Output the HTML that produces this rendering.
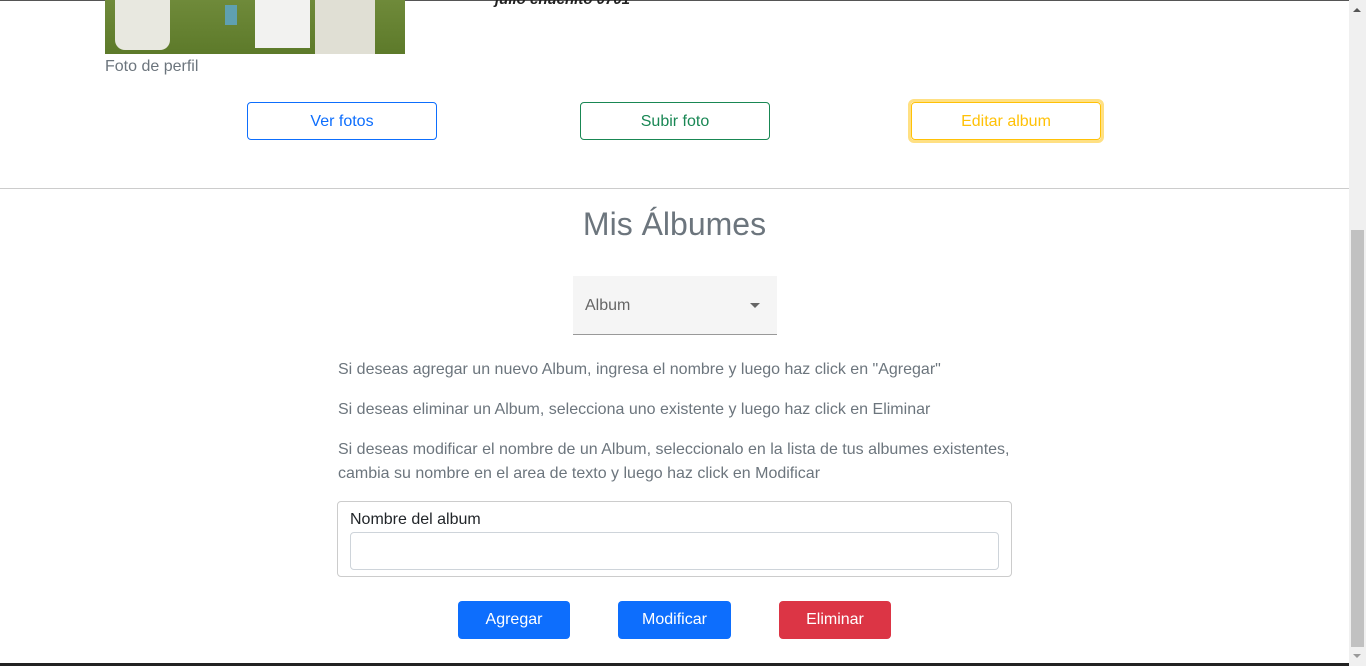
<!DOCTYPE html>
<html><head><meta charset="utf-8"><style>
body{margin:0;width:1366px;height:666px;overflow:hidden;background:#fff;font-family:"Liberation Sans",sans-serif;position:relative}
.abs{position:absolute}
.btn{position:absolute;box-sizing:border-box;border-radius:4px;font-size:16px;text-align:center;line-height:37px;height:38px}
p{margin:0}
</style></head><body>
<div class="abs" style="left:0;top:0;width:1366px;height:1px;background:#555"></div>
<div class="abs" style="left:105px;top:0;width:300px;height:54px;background:linear-gradient(180deg,#6f8a3a,#5d7a2a)">
 <div class="abs" style="left:10px;top:0;width:55px;height:50px;background:#e8e8e0;border-radius:0 0 10px 10px"></div>
 <div class="abs" style="left:120px;top:5px;width:12px;height:20px;background:#5fa0b0"></div>
 <div class="abs" style="left:150px;top:0;width:55px;height:48px;background:#f2f2f0"></div>
 <div class="abs" style="left:210px;top:0;width:60px;height:54px;background:#e0dfd4"></div>
</div>
<div class="abs" style="left:495px;top:-9px;font-size:15px;font-weight:bold;font-style:italic;color:#222">julio chuchito 0701</div>
<div class="abs" style="left:105px;top:58px;font-size:16px;color:#6c757d">Foto de perfil</div>
<div class="btn" style="left:247px;top:102px;width:190px;border:1px solid #0d6efd;color:#0d6efd">Ver fotos</div>
<div class="btn" style="left:580px;top:102px;width:190px;border:1px solid #198754;color:#198754">Subir foto</div>
<div class="btn" style="left:908px;top:99px;width:196px;height:44px;border:3px solid #ffe083;border-radius:6px;padding:0"><div style="margin:0;border:1px solid #ffc107;border-radius:4px;height:36px;color:#ffc107;line-height:37px">Editar album</div></div>
<div class="abs" style="left:0;top:188px;width:1349px;height:1px;background:#ccc"></div>
<div class="abs" style="left:0;top:206px;width:1349px;text-align:center;font-size:32px;color:#6c757d">Mis Álbumes</div>
<div class="abs" style="left:573px;top:276px;width:204px;height:59px;background:#f5f5f5;border-bottom:1px solid #999;box-sizing:border-box"></div>
<div class="abs" style="left:585px;top:297px;font-size:16px;color:#666">Album</div>
<div class="abs" style="left:750px;top:303px;width:0;height:0;border-left:5px solid transparent;border-right:5px solid transparent;border-top:5px solid #666"></div>
<div class="abs" style="left:338px;top:358px;font-size:16px;color:#6c757d;line-height:24px;width:700px">
<p>Si deseas agregar un nuevo Album, ingresa el nombre y luego haz click en "Agregar"</p>
<p style="margin-top:16px">Si deseas eliminar un Album, selecciona uno existente y luego haz click en Eliminar</p>
<p style="margin-top:16px">Si deseas modificar el nombre de un Album, seleccionalo en la lista de tus albumes existentes,<br>cambia su nombre en el area de texto y luego haz click en Modificar</p>
</div>
<div class="abs" style="left:337px;top:501px;width:675px;height:76px;border:1px solid #ccc;border-radius:4px;box-sizing:border-box"></div>
<div class="abs" style="left:350px;top:511px;font-size:16px;color:#212529">Nombre del album</div>
<div class="abs" style="left:350px;top:532px;width:649px;height:38px;border:1px solid #ced4da;border-radius:4px;box-sizing:border-box"></div>
<div class="btn" style="left:458px;top:601px;width:112px;background:#0d6efd;color:#fff">Agregar</div>
<div class="btn" style="left:618px;top:601px;width:113px;background:#0d6efd;color:#fff">Modificar</div>
<div class="btn" style="left:779px;top:601px;width:112px;background:#dc3545;color:#fff">Eliminar</div>
<div class="abs" style="left:0;top:663px;width:1349px;height:3px;background:#222"></div>
<div class="abs" style="left:1349px;top:0;width:17px;height:666px;background:#f0f0f0"></div>
<div class="abs" style="left:1351px;top:230px;width:13px;height:417px;background:#c1c1c1"></div>
<div class="abs" style="left:1353px;top:8px;width:0;height:0;border-left:4px solid transparent;border-right:4px solid transparent;border-bottom:4px solid #555"></div>
<div class="abs" style="left:1353px;top:654px;width:0;height:0;border-left:4px solid transparent;border-right:4px solid transparent;border-top:4px solid #999"></div>
</body></html>
